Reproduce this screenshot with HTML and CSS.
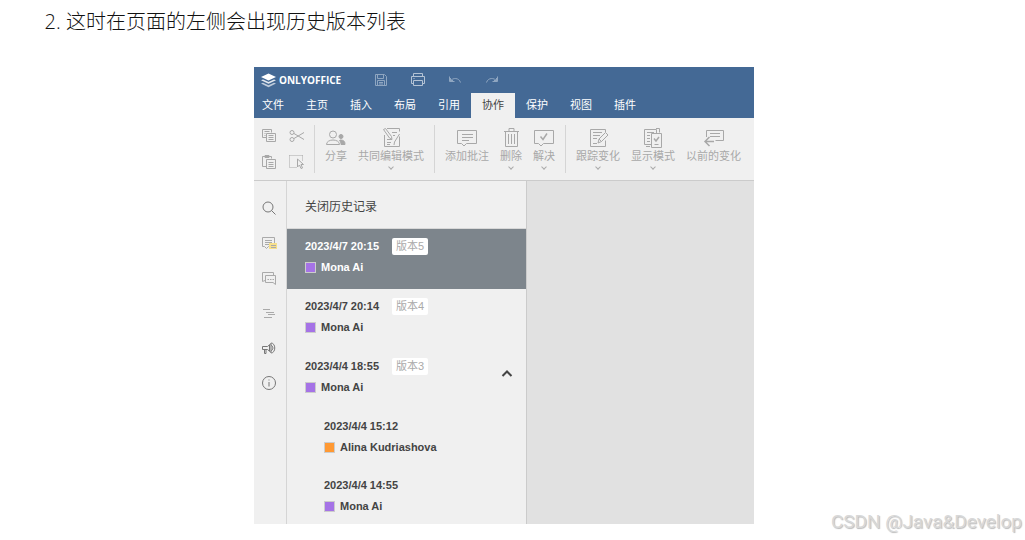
FILE: index.html
```html
<!DOCTYPE html>
<html lang="zh-CN">
<head>
  <meta charset="UTF-8">
  <title>历史版本列表</title>
  <link rel="stylesheet" href="styles.css">
</head>
<body>
  <main class="article">
    <ol class="steps" start="2">
      <li>这时在页面的左侧会出现历史版本列表</li>
    </ol>

    <section class="editor">
      <header class="header">
        <div class="title-bar">
          <div class="logo">
            <svg width="15" height="15" viewBox="0 0 15 15">
              <path d="M7.500 0.500L15 4L7.500 7.500L0 4z"/>
              <path d="M0 7.300L2 6.400L7.500 9L13 6.400L15 7.300L7.500 10.800z" opacity=".85"/>
              <path d="M0 10.600L2 9.700L7.500 12.300L13 9.700L15 10.600L7.500 14.200z" opacity=".65"/>
            </svg>
            <span>ONLYOFFICE</span>
          </div>
          <div class="quick">
            <button aria-label="保存"><svg width="16" height="16" viewBox="0 0 16 16"><path d="M2.500 2.500h9l2 2v9h-11zM4.500 2.500v4h6v-4M4.500 13.500v-5h7v5M6 10.500h4M6 12h4"/></svg></button>
            <button class="bright" aria-label="打印"><svg width="16" height="16" viewBox="0 0 16 16"><path d="M3.500 4.500v-3h9v3M3.500 11.500h-2v-7h13v7h-2M3.500 8.500h9v5h-9zM3.500 6.500h1"/></svg></button>
            <button aria-label="撤销"><svg width="16" height="16" viewBox="0 0 16 16"><path d="M2.500 4.500v5h5M3 9C6 5.500 12 5.500 13.500 10.500M3.500 6v2.500h2.500"/></svg></button>
            <button aria-label="重做"><svg width="16" height="16" viewBox="0 0 16 16"><path d="M13.500 4.500v5h-5M13 9C10 5.500 4 5.500 2.500 10.500M12.500 6v2.500h-2.500"/></svg></button>
          </div>
        </div>
        <nav class="tabs">
          <button>文件</button>
          <button>主页</button>
          <button>插入</button>
          <button>布局</button>
          <button>引用</button>
          <button class="active">协作</button>
          <button>保护</button>
          <button>视图</button>
          <button>插件</button>
        </nav>
      </header>

      <div class="toolbar">
        <div class="clipboard">
          <button aria-label="复制"><svg width="16" height="16" viewBox="0 0 16 16"><path d="M5 9.500H1.500v-8h9v3M3.500 3.500h5M3.500 5.500h1M3.500 7.500h1M5.500 5.500h9v8h-9zM7.500 7.500h5M7.500 9.500h5M7.500 11.500h5"/></svg></button>
          <button aria-label="剪切"><svg width="16" height="16" viewBox="0 0 16 16"><circle cx="3" cy="4.500" r="2"/><circle cx="3" cy="11.500" r="2"/><path d="M5 5.500l10 6M5 10.500l10-6"/></svg></button>
          <button aria-label="粘贴"><svg width="16" height="16" viewBox="0 0 16 16"><path d="M5 12.500H1.500v-10h9v2M4 1.500h4v2H4zM5.500 5.500h9v9h-9zM7.500 8.500h5M7.500 10.500h5M7.500 12.500h5"/></svg></button>
          <button aria-label="全选"><svg width="16" height="16" viewBox="0 0 16 16"><path d="M0.500 1.500h13M0.500 1.500v12M13.500 1.500v6M0.500 13.500h7" stroke-dasharray="1 1"/><path d="M8.500 5v8l2-2 1.500 3.500 1.500-.5-1.500-3.500h2.500z"/></svg></button>
        </div>
        <div class="group">
          <button class="tool"><svg width="22" height="22" viewBox="0 0 22 22"><circle cx="8" cy="7.500" r="3.500"/><path d="M1.500 17.500c0-6 13-6 13 0z"/><circle cx="16" cy="9.500" r="2" class="solid"/><path d="M15 13c4 0 5 1.500 5 4.500h-4c0-2-.5-3-1.500-4z" class="solid"/></svg><span>分享</span></button>
          <button class="tool"><svg width="22" height="22" viewBox="0 0 22 22"><path d="M4.500 8v11.500h15v-10M7 1.500h12.500v3M12 5.500h5M13 8.500h2M7 12.500h5M7 15.500h4M7 17.500h3"/><path d="M3.500 2.500l2-1 6 8 .5 3-2.500-1.500zM19.500 7l-5 8-.5 3"/></svg><span>共同编辑模式</span><i class="caret"></i></button>
        </div>
        <div class="group">
          <button class="tool"><svg width="22" height="22" viewBox="0 0 22 22"><path d="M1.500 3.500h19v13h-10l-2.500 2.500-2.500-2.500h-4zM6 7.500h11M6 10.500h11M6 13.500h7"/></svg><span>添加批注</span></button>
          <button class="tool"><svg width="22" height="22" viewBox="0 0 22 22"><path d="M5.500 5v14.500h12v-14.500M4 4.500h15M9 4v-2.500h5v2.500M8.500 7v10M11.500 7v10M14.500 7v10"/></svg><span>删除</span><i class="caret"></i></button>
          <button class="tool"><svg width="22" height="22" viewBox="0 0 22 22"><path d="M1.500 3.500h19v13h-10l-2.500 2.500-2.500-2.500h-4z"/><path d="M7.500 9.500l2.500 3 4-6" stroke-width="1.500"/></svg><span>解决</span><i class="caret"></i></button>
        </div>
        <div class="group">
          <button class="tool"><svg width="22" height="22" viewBox="0 0 22 22"><path d="M18.500 5v-2.500h-15v17h15v-6M6 5.500h9M6 8.500h7M6 11.500h4M6 16.500h4M11 16l1-4 6.500-6.500 2.500 2.500-6.500 6.500zM12 12l2.500 2.500"/></svg><span>跟踪变化</span><i class="caret"></i></button>
          <button class="tool"><svg width="22" height="22" viewBox="0 0 22 22"><path d="M9 17.500H2.500v-15h12v4M5 5.500h7M5 8.500h3M5 11.500h3M5 14.500h3M14 1.500h3.500v4M4 19.500h4M9.500 6.500h10v14h-10zM12.500 17.500h4"/><path d="M12 11.500l2 2.500 3-4" stroke-width="1.500"/></svg><span>显示模式</span><i class="caret"></i></button>
          <button class="tool"><svg width="22" height="22" viewBox="0 0 22 22"><path d="M3.500 10v-6.500h17v10h-8M7 6.500h10M7 9.500h10"/><path d="M11 14.500H2M6.500 10l-4.500 4.500 4.500 4.500" stroke-width="1.500"/></svg><span>以前的变化</span></button>
        </div>
      </div>

      <div class="workspace">
        <aside class="rail">
          <button aria-label="查找"><svg width="16" height="16" viewBox="0 0 16 16"><circle cx="7" cy="7" r="5"/><path d="M10.500 10.500l4 4"/></svg></button>
          <button class="dim" aria-label="批注"><svg width="16" height="16" viewBox="0 0 16 16"><path d="M1.500 2.500h12v9h-6l-2 2-2-2h-2zM4 5.500h7M4 7.500h7M4 9.500h4"/><rect x="8" y="8" width="8" height="6" class="mark"/><path d="M10 10.500h5M10 12.500h5"/></svg></button>
          <button class="dim" aria-label="聊天"><svg width="16" height="16" viewBox="0 0 16 16"><path d="M4 10.500l-2.500 1v-9h11v3M4.500 5.500h10v9l-2.500-2h-7.500zM6.500 9.500h1.500M9 9.500h1.500M11.500 9.500h1.500"/></svg></button>
          <button class="dim" aria-label="导航"><svg width="16" height="16" viewBox="0 0 16 16"><path d="M2 4.500h7M5 7.500h8M7 9.500h7M3 12.500h8"/></svg></button>
          <button aria-label="反馈"><svg width="16" height="16" viewBox="0 0 16 16"><path d="M1.500 6.500h5l3.500-3v9l-3.500-3h-5zM3.500 9.500v4h1.500v-4M10 3c5 0 5 10 0 10M10 5.500c2.500 0 2.500 5 0 5M8.500 5v6"/></svg></button>
          <button aria-label="关于"><svg width="16" height="16" viewBox="0 0 16 16"><circle cx="8" cy="8" r="6.500"/><path d="M8 7v4.500M8 4.500v1"/></svg></button>
        </aside>

        <section class="history">
          <button class="close-history">关闭历史记录</button>
          <ul class="versions">
            <li class="version selected">
              <div class="row"><time>2023/4/7 20:15</time><span class="tag">版本5</span></div>
              <div class="user"><i class="swatch"></i>Mona Ai</div>
            </li>
            <li class="version">
              <div class="row"><time>2023/4/7 20:14</time><span class="tag">版本4</span></div>
              <div class="user"><i class="swatch"></i>Mona Ai</div>
            </li>
            <li class="version expanded">
              <div>
                <div class="row"><time>2023/4/4 18:55</time><span class="tag">版本3</span></div>
                <div class="user"><i class="swatch"></i>Mona Ai</div>
              </div>
              <button class="toggle" aria-label="收起"><svg width="12" height="12" viewBox="0 0 12 12"><path d="M1.500 8L6 3.500L10.500 8"/></svg></button>
            </li>
            <li class="version sub">
              <div class="row"><time>2023/4/4 15:12</time></div>
              <div class="user"><i class="swatch orange"></i>Alina Kudriashova</div>
            </li>
            <li class="version sub">
              <div class="row"><time>2023/4/4 14:55</time></div>
              <div class="user"><i class="swatch"></i>Mona Ai</div>
            </li>
          </ul>
        </section>
        <div class="canvas"></div>
      </div>
    </section>
  </main>
  <div class="watermark">CSDN @Java&amp;Develop</div>
</body>
</html>
```

FILE: styles.css
```css
* {
  box-sizing: border-box;
}
body {
  margin: 0;
  background: #fff;
  font-family: "Liberation Sans", "Noto Sans CJK SC", sans-serif;
  overflow: hidden;
}
button {
  padding: 0;
  border: none;
  background: none;
  color: inherit;
  font: inherit;
  cursor: pointer;
}
svg {
  display: block;
  fill: none;
  stroke: currentColor;
}
.article {
  padding-right: 17px;
}
.steps {
  margin: 0 0 23px;
  padding: 0 0 0 66px;
  font: 300 20px/44px "Open Sans", "Noto Sans CJK SC", sans-serif;
  color: #111;
}

/* editor */
.editor {
  max-width: 500px;
  margin: 0 auto;
  background: #f0f0f0;
  overflow: hidden;
}
.header {
  background: #446995;
  color: #fff;
}
.title-bar {
  display: flex;
  align-items: center;
  height: 26px;
  padding-left: 7px;
}
.logo {
  display: flex;
  align-items: center;
  gap: 3px;
  width: 112px;
  font: 700 10px/16px "Open Sans", sans-serif;
}
.logo svg {
  stroke: none;
  fill: #fff;
}
.quick {
  display: flex;
  gap: 21px;
  color: #8fa6c1;
}
.quick .bright {
  color: #b4c3d5;
}
.tabs {
  display: flex;
  height: 25px;
  font-size: 11px;
}
.tabs button {
  padding: 0 11px 3px;
}
.tabs button:first-child {
  padding-left: 8px;
}
.tabs .active {
  background: #f0f0f0;
  color: #444;
}

/* toolbar */
.toolbar {
  display: flex;
  height: 63px;
  padding: 7px 0 7px 7px;
  border-bottom: 1px solid #cbcbcb;
  font-size: 11px;
  line-height: 14px;
  color: #a8a8a8;
}
.clipboard {
  display: grid;
  grid-template-columns: 16px 16px;
  gap: 10px 12px;
  align-content: start;
  flex: none;
  width: 53px;
  padding-top: 3px;
}
.group {
  display: flex;
  gap: 11px;
  align-items: flex-start;
  flex: none;
  padding: 2px 10px 0;
  border-left: 1px solid #d5d5d5;
}
.tool {
  display: flex;
  flex-direction: column;
  align-items: center;
  flex: none;
  white-space: nowrap;
}
.solid {
  fill: currentColor;
}
.caret {
  width: 4px;
  height: 4px;
  margin-top: 2px;
  border: solid #aaa;
  border-width: 0 1px 1px 0;
  transform: rotate(45deg);
}

/* workspace */
.workspace {
  display: flex;
  height: 343px;
}
.rail {
  display: flex;
  flex-direction: column;
  align-items: center;
  gap: 19px;
  width: 33px;
  padding: 19px 2px 0 0;
  border-right: 1px solid #d5d5d5;
  color: #777;
}
.rail .dim {
  color: #aaa;
}
.mark {
  fill: #f7e08b;
  stroke: none;
}
.history {
  width: 240px;
  border-right: 1px solid #cbcbcb;
  color: #444;
}
.close-history {
  display: block;
  width: 100%;
  height: 48px;
  padding: 2px 18px 0;
  border-bottom: 1px solid #d8d8d8;
  font-size: 12px;
  text-align: left;
}
.versions {
  margin: 0;
  padding: 0;
  list-style: none;
  font-size: 11px;
  font-weight: bold;
}
.version {
  height: 60px;
  padding: 8px 13px 0 18px;
}
.selected {
  background: #7d858c;
  color: #fff;
}
.expanded {
  display: flex;
  justify-content: space-between;
}
.sub {
  height: 59px;
  padding-left: 37px;
}
.row {
  display: flex;
  align-items: center;
  gap: 13px;
  height: 18px;
}
.tag {
  padding: 0 4px;
  border-radius: 2px;
  background: #fff;
  color: #aaa;
  font-weight: normal;
  line-height: 17px;
}
.user {
  display: flex;
  align-items: center;
  gap: 5px;
  height: 24px;
}
.swatch {
  width: 11px;
  height: 11px;
  border: 1px solid #ccc;
  background: #a573e6;
}
.orange {
  background: #ff9933;
}
.toggle {
  height: 34px;
  color: #444;
}
.toggle svg {
  stroke-width: 2;
}
.canvas {
  flex: 1;
  background: #e1e1e1;
}
.watermark {
  position: absolute;
  right: 3px;
  bottom: 6px;
  color: #d8d8d8;
  font-family: Roboto, sans-serif;
  font-size: 19px;
  line-height: 24px;
  text-shadow: 1px 1px 1px #bbb;
}
```
